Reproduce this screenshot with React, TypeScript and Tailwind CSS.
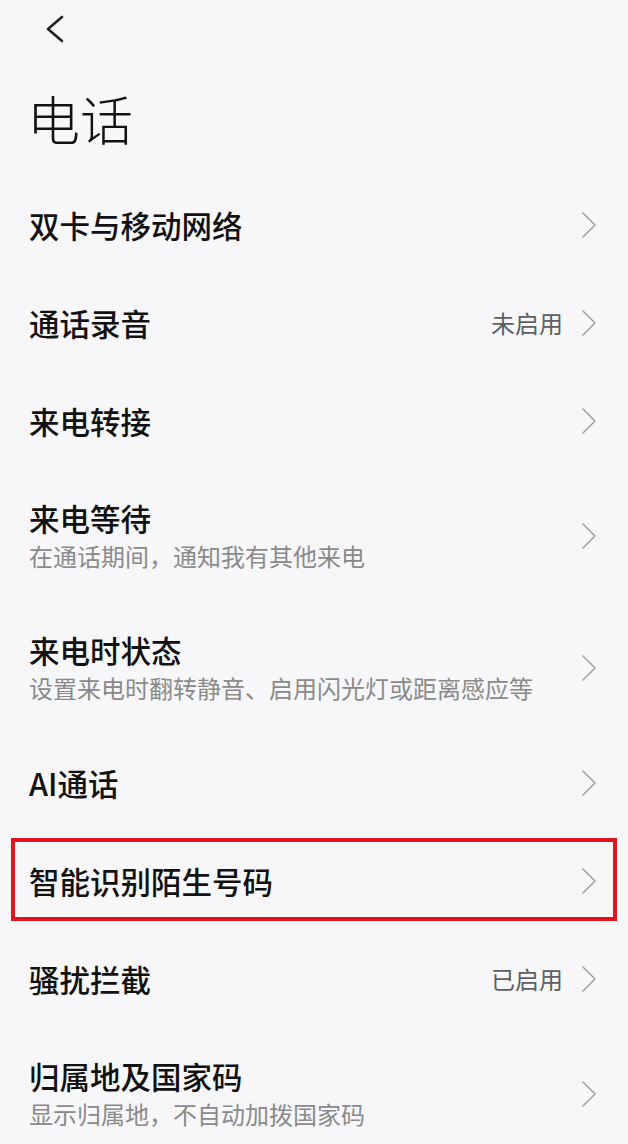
import React from "react";

type Row = {
  title: string;
  subtitle?: string;
  value?: string;
  highlight?: boolean;
};

const rows: Row[] = [
  { title: "双卡与移动网络" },
  { title: "通话录音", value: "未启用" },
  { title: "来电转接" },
  { title: "来电等待", subtitle: "在通话期间，通知我有其他来电" },
  { title: "来电时状态", subtitle: "设置来电时翻转静音、启用闪光灯或距离感应等" },
  { title: "AI通话" },
  { title: "智能识别陌生号码", highlight: true },
  { title: "骚扰拦截", value: "已启用" },
  { title: "归属地及国家码", subtitle: "显示归属地，不自动加拨国家码" },
];

const Chevron = () => (
  <svg width="16" height="28" viewBox="0 0 16 28" fill="none" className="shrink-0">
    <polyline
      points="2,2 14,14 2,26"
      stroke="#a0a0a0"
      strokeWidth="1.5"
      strokeLinecap="round"
      strokeLinejoin="round"
    />
  </svg>
);

const SettingRow = ({ row }: { row: Row }) => {
  const tall = !!row.subtitle;
  return (
    <div
      className={`relative flex items-center justify-between pl-[29px] pr-[31px] ${
        tall ? "h-[132px]" : "h-[98px]"
      }`}
    >
      <div className={`flex flex-col ${tall ? "pt-[2px]" : ""}`}>
        <span className="text-[30.5px] leading-[36px] font-medium text-[#111]">{row.title}</span>
        {row.subtitle && (
          <span className="mt-[2px] text-[24px] leading-[36px] text-[#8a8a8a]">
            {row.subtitle}
          </span>
        )}
      </div>
      <div className="flex items-center gap-[18px]">
        {row.value && <span className="text-[24px] leading-[30px] text-[#5f5f5f]">{row.value}</span>}
        <Chevron />
      </div>
      {row.highlight && (
        <div className="pointer-events-none absolute left-[11px] top-[6px] h-[83px] w-[606px] border-[4px] border-[#e3141b]" />
      )}
    </div>
  );
};

export default function App() {
  return (
    <div
      className="min-h-[1144px] w-[628px] overflow-hidden bg-[#f7f7f9]"
      style={{ fontFamily: '"Noto Sans CJK SC", "Noto Sans", sans-serif' }}
    >
      <div className="flex h-[60px] items-center pl-[44px]">
        <svg width="22" height="32" viewBox="0 0 22 32" fill="none">
          <polyline
            points="18,3 4,15 18,27"
            stroke="#222"
            strokeWidth="2.6"
            strokeLinecap="round"
            strokeLinejoin="round"
          />
        </svg>
      </div>
      <div className="pl-[27px] pt-[26px] pb-[26px]">
        <h1 className="text-[53px] leading-[64px] font-light text-[#111]">电话</h1>
      </div>
      <div className="flex flex-col">
        {rows.map((row) => (
          <SettingRow key={row.title} row={row} />
        ))}
      </div>
    </div>
  );
}
